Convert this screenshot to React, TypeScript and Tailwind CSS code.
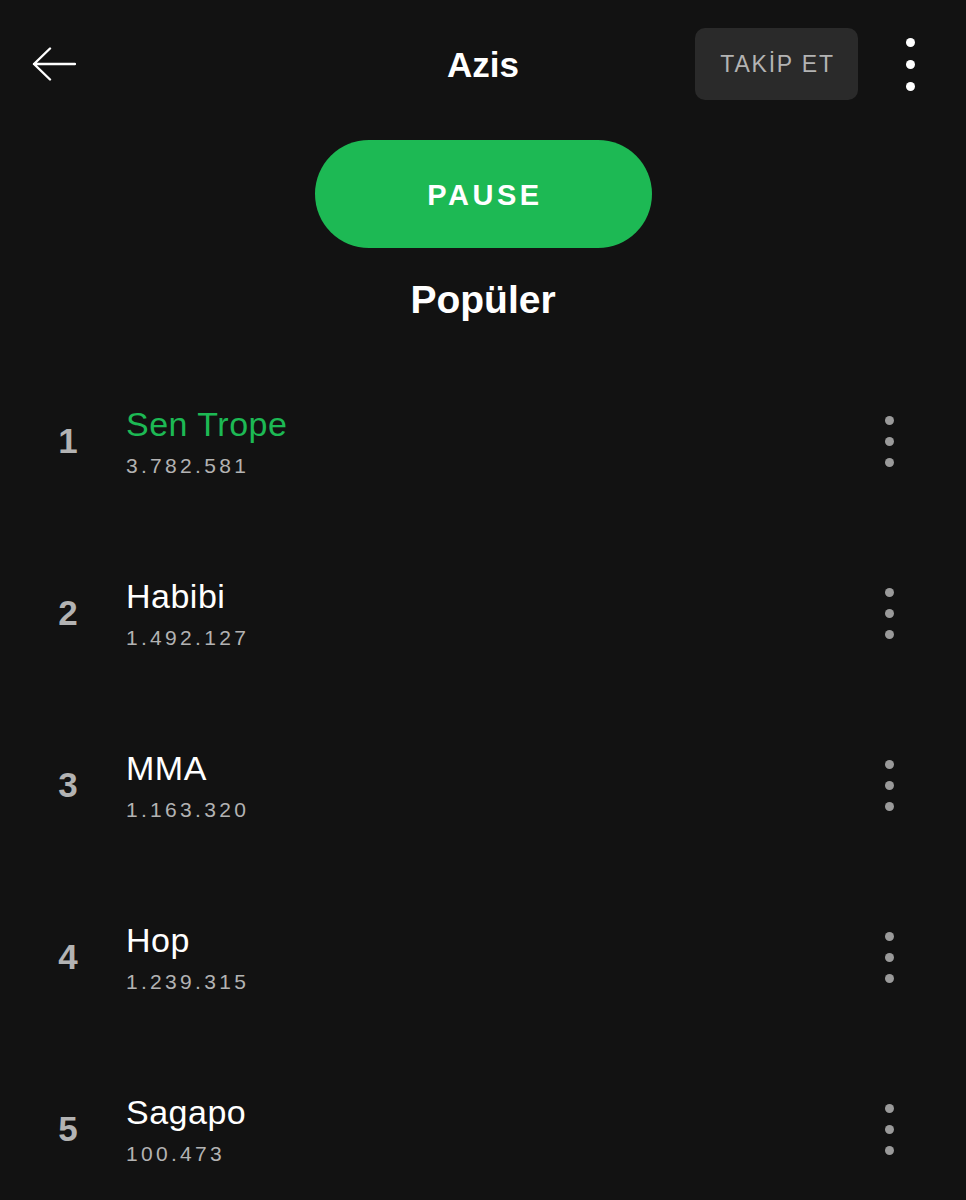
import { useState } from "react";

const tracks = [
  { title: "Sen Trope", plays: "3.782.581" },
  { title: "Habibi", plays: "1.492.127" },
  { title: "MMA", plays: "1.163.320" },
  { title: "Hop", plays: "1.239.315" },
  { title: "Sagapo", plays: "100.473" },
];

function Dots({ color, gap }: { color: string; gap: string }) {
  return (
    <div className={`flex flex-col items-center ${gap}`}>
      <span className={`block h-[9px] w-[9px] rounded-full ${color}`} />
      <span className={`block h-[9px] w-[9px] rounded-full ${color}`} />
      <span className={`block h-[9px] w-[9px] rounded-full ${color}`} />
    </div>
  );
}

export default function App() {
  const [playing] = useState(0);

  return (
    <main
      className="min-h-[1200px] w-full overflow-hidden bg-[#121212] text-white"
      style={{ fontFamily: '"Liberation Sans", Arial, sans-serif' }}
    >
      {/* Header */}
      <header className="grid h-[128px] grid-cols-[1fr_auto_1fr] items-center">
        <div className="pl-[32px]">
          <svg width="44" height="34" viewBox="0 0 44 34" fill="none">
            <path
              d="M43 17H2M18 1.5L2 17l16 15.5"
              stroke="white"
              strokeWidth="2.4"
              strokeLinecap="round"
              strokeLinejoin="round"
            />
          </svg>
        </div>
        <h1 className="text-[35px] font-bold leading-none">Azis</h1>
        <div className="flex items-center justify-end pr-[46px]">
          <button className="flex h-[72px] w-[163px] items-center justify-center rounded-[10px] bg-[#2a2a2a] pl-[2px] text-[23px] tracking-[1.8px] text-[#b3b3b3]">
            TAKİP ET
          </button>
          <div className="ml-[42px] w-[20px]">
            <Dots color="bg-white" gap="gap-[13px]" />
          </div>
        </div>
      </header>

      {/* Pause */}
      <div className="mt-[12px] flex justify-center">
        <button className="flex h-[108px] w-[337px] items-center justify-center rounded-full bg-[#1db954] pl-[4px] pt-[3px] text-[29px] font-bold tracking-[3.5px] text-white">
          PAUSE
        </button>
      </div>

      <h2 className="mt-[32px] text-center text-[39px] font-bold leading-[39px]">Popüler</h2>

      {/* Tracks */}
      <ul className="mt-[36px]">
        {tracks.map((t, i) => (
          <li key={t.title} className="flex h-[172px] items-center pl-[48px] pr-[65px]">
            <span className="w-[40px] text-center text-[35px] font-bold text-[#b3b3b3]">{i + 1}</span>
            <div className="ml-[38px] flex flex-1 flex-col">
              <span
                className={`text-[34px] leading-[40px] tracking-[0.5px] ${
                  i === playing ? "text-[#1db954]" : "text-white"
                }`}
              >
                {t.title}
              </span>
              <span className="mt-[10px] text-[21px] leading-[24px] tracking-[3.3px] text-[#b3b3b3]">
                {t.plays}
              </span>
            </div>
            <div className="w-[24px]">
              <Dots color="bg-[#9a9a9a]" gap="gap-[12px]" />
            </div>
          </li>
        ))}
      </ul>
    </main>
  );
}
